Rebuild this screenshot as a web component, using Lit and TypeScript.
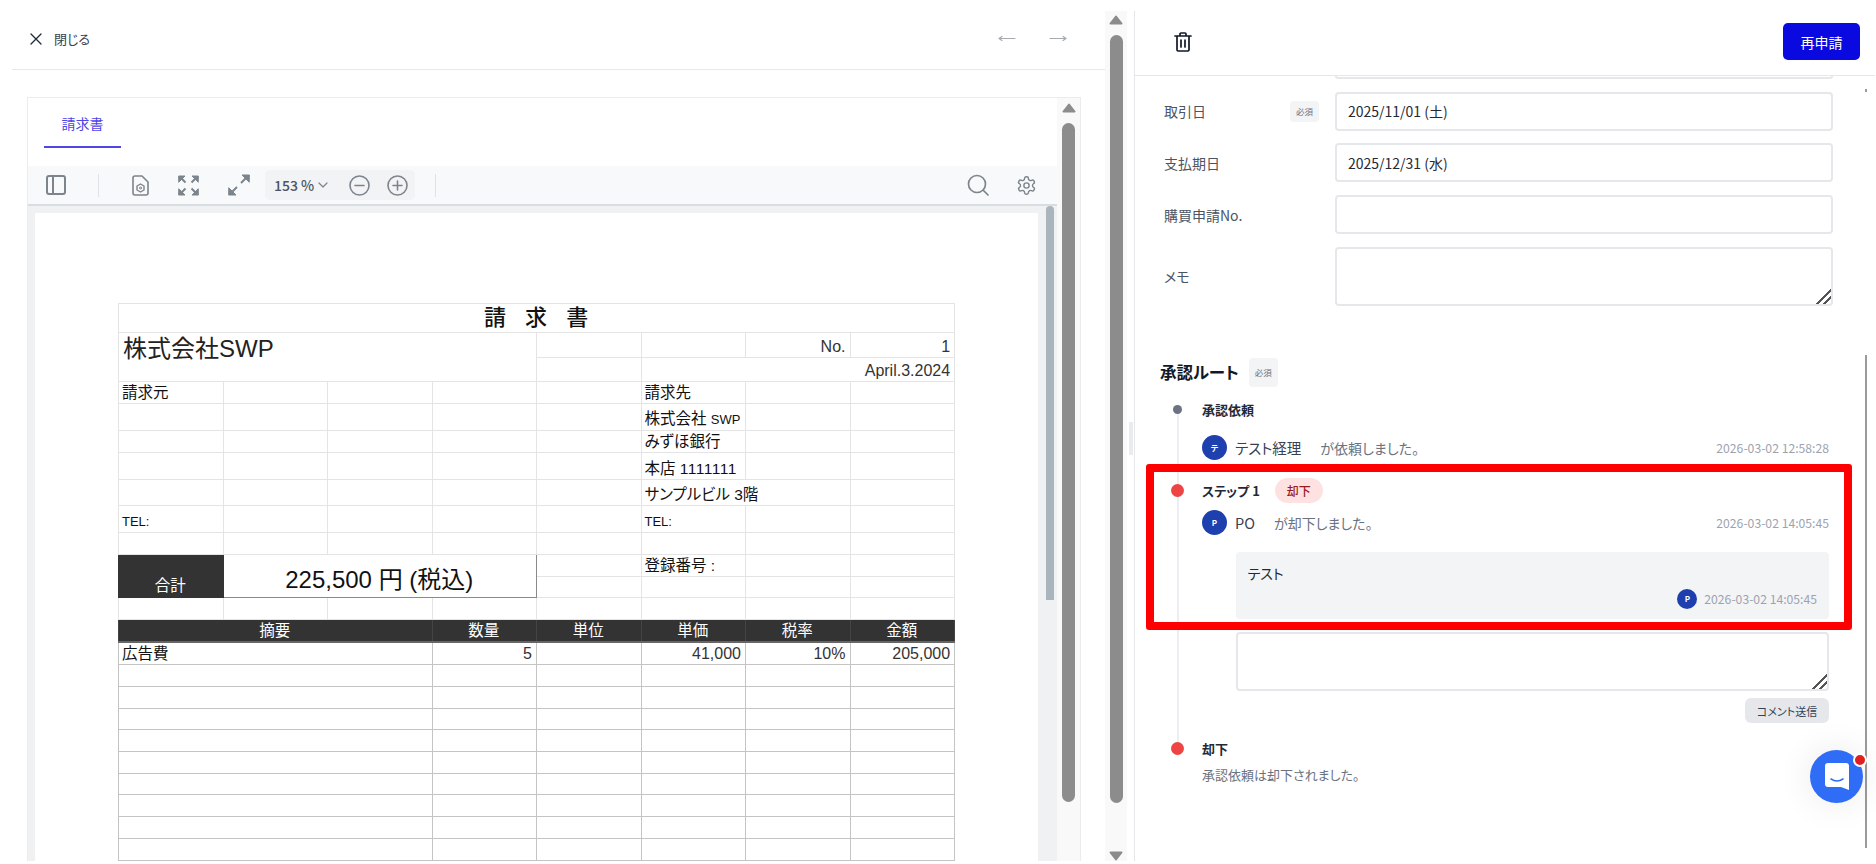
import { LitElement, html, css, svg } from 'lit';
import { customElement } from 'lit/decorators.js';

const BLANK_ROWS = 10;

const arrowUp = html`<svg class="tri" viewBox="0 0 14 10"><path d="M7 1.5 12.5 8.5H1.5Z" fill="#8c8c8c" stroke="#8c8c8c" stroke-width="2" stroke-linejoin="round"/></svg>`;
const arrowDown = html`<svg class="tri" viewBox="0 0 14 10"><path d="M1.5 1.5H12.5L7 8.5Z" fill="#8c8c8c" stroke="#8c8c8c" stroke-width="2" stroke-linejoin="round"/></svg>`;

const icon = (w: number, h: number, body: unknown, box = '0 0 24 24') => html`
  <svg class="ico" width=${w} height=${h} viewBox=${box} fill="none" stroke="currentColor" stroke-width="2" stroke-linecap="round" stroke-linejoin="round">${body}</svg>
`;

const gearPath = 'M12.22 2h-.44a2 2 0 0 0-2 2v.18a2 2 0 0 1-1 1.73l-.43.25a2 2 0 0 1-2 0l-.15-.08a2 2 0 0 0-2.73.73l-.22.38a2 2 0 0 0 .73 2.73l.15.1a2 2 0 0 1 1 1.72v.51a2 2 0 0 1-1 1.74l-.15.09a2 2 0 0 0-.73 2.73l.22.38a2 2 0 0 0 2.73.73l.15-.08a2 2 0 0 1 2 0l.43.25a2 2 0 0 1 1 1.73V20a2 2 0 0 0 2 2h.44a2 2 0 0 0 2-2v-.18a2 2 0 0 1 1-1.73l.43-.25a2 2 0 0 1 2 0l.15.08a2 2 0 0 0 2.73-.73l.22-.39a2 2 0 0 0-.73-2.73l-.15-.08a2 2 0 0 1-1-1.74v-.5a2 2 0 0 1 1-1.74l.15-.09a2 2 0 0 0 .73-2.73l-.22-.38a2 2 0 0 0-2.73-.73l-.15.08a2 2 0 0 1-2 0l-.43-.25a2 2 0 0 1-1-1.73V4a2 2 0 0 0-2-2z';

@customElement('invoice-sheet')
export class InvoiceSheet extends LitElement {
  static styles = css`
    :host {
      display: block;
    }
    table {
      width: 836px;
      table-layout: fixed;
      border-collapse: collapse;
      font-family: 'Liberation Sans', 'Noto Sans CJK JP', sans-serif;
      font-size: 15.5px;
      line-height: 21px;
      color: #111;
    }
    td {
      border: 1px solid #e4e4e4;
      padding: 0 4px 0 3px;
      vertical-align: bottom;
      white-space: nowrap;
      overflow: hidden;
    }
    .title {
      text-align: center;
      vertical-align: middle;
      font-size: 22px;
      font-weight: 500;
      line-height: 26px;
      word-spacing: 13px;
      color: #111;
    }
    .company {
      vertical-align: top;
      font-size: 24px;
      line-height: 24px;
      padding: 4px 4px 0;
      color: #222;
    }
    .num {
      text-align: right;
      font-size: 16px;
      color: #333;
    }
    .small {
      font-size: 13px;
    }
    .digits {
      letter-spacing: 0.5px;
    }
    .total-label {
      background: #333;
      border-color: #333;
      color: #fff;
      text-align: center;
      vertical-align: middle;
      padding-top: 20px;
      line-height: 20px;
    }
    .total-value {
      border: 1px solid #8a8a8a;
      text-align: center;
      vertical-align: middle;
      font-size: 24px;
      line-height: 24px;
      padding-top: 8px;
      color: #111;
    }
    .head td {
      background: #333;
      border-color: #444;
      border-bottom: 2px solid #666;
      color: #fff;
      text-align: center;
      vertical-align: middle;
    }
    .lined td {
      border-color: #c4c4c4;
    }
  `;

  private row(h: number, cells: unknown, cls = '') {
    return html`<tr class=${cls} style="height:${h}px">${cells}</tr>`;
  }

  private emptyCells(n: number) {
    return Array.from({ length: n }, () => html`<td></td>`);
  }

  render() {
    const blanks = Array.from({ length: BLANK_ROWS }, () =>
      this.row(21.7, html`<td colspan="3"></td>${this.emptyCells(5)}`, 'lined'),
    );
    const plain = (h: number, right: unknown) =>
      this.row(h, html`${this.emptyCells(5)}<td>${right}</td>${this.emptyCells(2)}`);

    return html`
      <table>
        <colgroup>${Array.from({ length: 8 }, () => html`<col style="width:104.5px" />`)}</colgroup>
        ${this.row(29.4, html`<td class="title" colspan="8">請 求 書</td>`)}
        ${this.row(24.6, html`
          <td class="company" colspan="4" rowspan="2">株式会社SWP</td>
          <td></td><td></td>
          <td class="num">No.</td><td class="num">1</td>
        `)}
        ${this.row(24, html`<td></td><td class="num" colspan="3">April.3.2024</td>`)}
        ${this.row(21.4, html`<td>請求元</td>${this.emptyCells(4)}<td>請求先</td><td></td><td></td>`)}
        ${plain(26.6, html`株式会社 <span class="small">SWP</span>`)}
        ${plain(22, 'みずほ銀行')}
        ${plain(27, html`本店 <span class="digits">1111111</span>`)}
        ${this.row(26.7, html`${this.emptyCells(5)}<td colspan="2">サンプルビル 3階</td><td></td>`)}
        ${this.row(27, html`<td class="small">TEL:</td>${this.emptyCells(4)}<td class="small">TEL:</td><td></td><td></td>`)}
        ${this.row(21.3, this.emptyCells(8))}
        ${this.row(22, html`
          <td class="total-label" rowspan="2">合計</td>
          <td class="total-value" colspan="3" rowspan="2">225,500 円 (税込)</td>
          <td></td><td>登録番号 :</td><td></td><td></td>
        `)}
        ${this.row(21.4, this.emptyCells(4))}
        ${this.row(21.6, this.emptyCells(8))}
        ${this.row(22.4, html`
          <td colspan="3">摘要</td><td>数量</td><td>単位</td><td>単価</td><td>税率</td><td>金額</td>
        `, 'head')}
        ${this.row(23.3, html`
          <td colspan="3">広告費</td>
          <td class="num">5</td><td></td><td class="num">41,000</td><td class="num">10%</td><td class="num">205,000</td>
        `, 'lined')}
        ${blanks}
      </table>
    `;
  }
}

@customElement('app-root')
export class AppRoot extends LitElement {
  static styles = css`
    :host {
      display: block;
      position: relative;
      width: 1876px;
      height: 864px;
      overflow: hidden;
      background: #fff;
      font-family: 'Noto Sans CJK JP', sans-serif;
      font-feature-settings: 'palt' 1;
      font-size: 14px;
      color: #374151;
    }
    .layout {
      display: flex;
      height: 861px;
    }
    .ico {
      display: block;
      flex: none;
    }
    .tri {
      display: block;
      width: 14px;
      height: 10px;
      flex: none;
    }

    /* left side */
    .left {
      width: 1093px;
      margin-left: 12px;
      display: flex;
      flex-direction: column;
      overflow: hidden;
    }
    .left-head {
      height: 70px;
      flex: none;
      display: flex;
      align-items: center;
      padding: 8px 38px 0 18px;
      box-sizing: border-box;
      border-bottom: 1px solid #e5e7eb;
    }
    .close {
      display: flex;
      align-items: center;
      gap: 12px;
      font-size: 13px;
      color: #374151;
    }
    .close .ico {
      color: #1f2937;
    }
    .pager {
      margin-left: auto;
      display: flex;
      gap: 33px;
    }
    .card {
      flex: 1;
      min-height: 0;
      width: 1054px;
      margin: 27px 0 0 15px;
      display: flex;
      box-sizing: border-box;
      border: 1px solid #ececec;
      border-bottom: 0;
      overflow: hidden;
    }
    .card-main {
      width: 1029px;
      flex: none;
      display: flex;
      flex-direction: column;
    }
    .tab {
      width: 77px;
      height: 50px;
      margin: 0 0 18px 16px;
      padding-top: 1px;
      flex: none;
      box-sizing: border-box;
      display: flex;
      align-items: center;
      justify-content: center;
      border-bottom: 2px solid #4f46e5;
      color: #4f46e5;
      font-size: 14px;
    }
    .toolbar {
      height: 40px;
      flex: none;
      box-sizing: border-box;
      display: flex;
      align-items: center;
      padding: 0 20px 0 18px;
      background: #f8f9fa;
      border-bottom: 2px solid #d8dde2;
      color: #7d848c;
    }
    .sep {
      width: 1px;
      height: 23px;
      background: #dfe2e6;
      flex: none;
    }
    .sep.a {
      margin: 0 33px 0 32px;
    }
    .sep.b {
      margin-left: 20px;
    }
    .ml-29 {
      margin-left: 29px;
    }
    .zoom {
      width: 150px;
      height: 30px;
      margin-left: 15px;
      padding-left: 9px;
      box-sizing: border-box;
      display: flex;
      align-items: center;
      background: #f1f3f5;
      border-radius: 5px;
      flex: none;
    }
    .zoom-value {
      font-size: 14px;
      font-weight: 500;
      color: #4b5563;
      width: 44px;
    }
    .zoom .minus {
      margin-left: 21px;
    }
    .zoom .plus {
      margin-left: 17px;
    }
    .tools-end {
      margin-left: auto;
      display: flex;
      align-items: center;
      gap: 27px;
    }
    .viewer {
      flex: 1;
      min-height: 0;
      display: flex;
      background: #eff1f3;
      overflow: hidden;
    }
    .page {
      width: 1003px;
      margin: 7px 0 0 7px;
      padding: 90px 0 0 83px;
      box-sizing: border-box;
      background: #fff;
      flex: none;
    }
    .viewer-thumb {
      width: 8px;
      height: 394px;
      margin-left: 8px;
      background: #aab4bd;
      border-radius: 4px 4px 0 0;
      flex: none;
    }
    .bar {
      flex: none;
      display: flex;
      flex-direction: column;
      align-items: center;
      background: #f9f9f9;
    }
    .bar .thumb {
      width: 13px;
      background: #8c8c8c;
      border-radius: 7px;
      flex: none;
    }
    .card-bar {
      width: 23px;
    }
    .card-bar .tri {
      margin-top: 5px;
    }
    .card-bar .thumb {
      margin-top: 10px;
      height: 679px;
    }
    .page-bar {
      width: 22px;
      margin-top: 11px;
    }
    .page-bar .tri:first-child {
      margin-top: 4px;
    }
    .page-bar .thumb {
      margin-top: 10px;
      height: 768px;
    }
    .page-bar .tri:last-child {
      margin-top: auto;
    }
    .gutter {
      width: 7px;
      flex: none;
      display: flex;
      justify-content: center;
    }
    .grip {
      width: 4px;
      height: 33px;
      margin-top: 422px;
      background: #e9ebee;
    }

    /* right side */
    .right {
      width: 741px;
      flex: none;
      box-sizing: border-box;
      padding-left: 1px;
      background: linear-gradient(#e5e7eb, #e5e7eb) 0 11px / 1px 100% no-repeat;
      display: flex;
      flex-direction: column;
      overflow: hidden;
    }
    .right-head {
      height: 76px;
      flex: none;
      box-sizing: border-box;
      display: flex;
      align-items: center;
      justify-content: space-between;
      padding: 8px 15px 0 39px;
      border-bottom: 1px solid #e5e7eb;
      color: #111827;
    }
    .resubmit {
      width: 77px;
      height: 37px;
      border: 0;
      border-radius: 5px;
      background: #0a0ae0;
      color: #fff;
      font: inherit;
      font-size: 14px;
    }
    .right-body {
      flex: 1;
      min-height: 0;
      display: flex;
    }
    .content {
      width: 730px;
      flex: none;
      padding-left: 29px;
      box-sizing: border-box;
    }
    .form {
      width: 668.5px;
      display: grid;
      grid-template-columns: 155px 1fr;
      column-gap: 16px;
      row-gap: 12.7px;
      align-items: center;
    }
    .stub {
      grid-column: 2;
      height: 3px;
      box-sizing: border-box;
      border: 2px solid #e5e7eb;
      border-top: 0;
      border-radius: 0 0 4px 4px;
    }
    .label {
      display: flex;
      align-items: center;
      justify-content: space-between;
      color: #4b5563;
    }
    .req {
      display: flex;
      align-items: center;
      justify-content: center;
      width: 29px;
      height: 21px;
      border-radius: 4px;
      background: #f3f4f6;
      color: #6b7280;
      font-size: 8.5px;
    }
    .field {
      height: 39px;
      box-sizing: border-box;
      border: 2px solid #e5e7eb;
      border-radius: 4px;
      padding: 0 11px;
      display: flex;
      align-items: center;
      color: #1f2937;
      background: #fff;
    }
    textarea {
      display: block;
      width: 100%;
      box-sizing: border-box;
      border: 2px solid #e5e7eb;
      border-radius: 4px;
      outline: none;
      background: #fff;
      margin: 0;
    }
    textarea::-webkit-resizer {
      background: linear-gradient(
        135deg,
        transparent 48%,
        #555 48%,
        #555 58%,
        transparent 58%,
        transparent 72%,
        #555 72%,
        #555 82%,
        transparent 82%
      );
    }
    .memo {
      height: 59px;
    }
    .route-head {
      display: flex;
      align-items: center;
      gap: 10px;
      margin: 52px 0 0 -4px;
      font-size: 16.5px;
      font-weight: 700;
      color: #111827;
    }
    .route-head .req {
      height: 29px;
      font-weight: 400;
    }
    .timeline {
      position: relative;
      width: 665px;
      margin-top: 11px;
    }
    .line {
      position: absolute;
      left: 13px;
      top: 12px;
      height: 338px;
      width: 2px;
      background: #eceef1;
    }
    .step-title {
      position: relative;
      height: 24px;
      display: flex;
      align-items: center;
      font-weight: 700;
      color: #1f2937;
      font-size: 13px;
    }
    .dot-cell {
      width: 27px;
      margin-right: 11px;
      display: flex;
      justify-content: center;
      flex: none;
    }
    .dot {
      width: 13px;
      height: 13px;
      border-radius: 50%;
      background: #ef4444;
    }
    .dot.grey {
      width: 9px;
      height: 9px;
      background: #6b7280;
    }
    .who {
      height: 25px;
      display: flex;
      align-items: center;
      padding-left: 38px;
      color: #6b7280;
    }
    .avatar {
      width: 25px;
      height: 25px;
      margin-right: 8px;
      border-radius: 50%;
      background: #1e40af;
      color: #fff;
      font-size: 8px;
      font-weight: 700;
      display: flex;
      align-items: center;
      justify-content: center;
      flex: none;
    }
    .avatar.sm {
      width: 20px;
      height: 20px;
    }
    .name {
      font-size: 14.5px;
      color: #374151;
      margin-right: 19px;
    }
    .time {
      margin-left: auto;
      font-size: 12.2px;
      color: #9ca3af;
    }
    .first-who {
      margin-top: 13.5px;
    }
    .step-two {
      height: 25px;
      margin-top: 17.5px;
    }
    .second-who {
      margin-top: 7.5px;
    }
    .rejected {
      margin-left: 15px;
      width: 48px;
      height: 25px;
      border-radius: 13px;
      background: #fee2e2;
      color: #991b1b;
      font-size: 12px;
      font-weight: 500;
      display: flex;
      align-items: center;
      justify-content: center;
    }
    .indented {
      margin-left: 71.6px;
    }
    .comment {
      height: 67px;
      margin-top: 16.5px;
      box-sizing: border-box;
      padding: 10px 12px 0;
      border-radius: 4px;
      background: #f3f4f6;
      color: #1f2937;
      line-height: 22px;
    }
    .comment-foot {
      display: flex;
      align-items: center;
      justify-content: flex-end;
      margin-top: 5px;
      height: 20px;
    }
    .comment-foot .avatar {
      margin-right: 7px;
    }
    .comment-foot .time {
      margin-left: 0;
    }
    .reply {
      height: 59px;
      margin-top: 13px;
      width: calc(100% - 71.6px);
    }
    .send-row {
      display: flex;
      justify-content: flex-end;
      margin-top: 7.5px;
    }
    .send {
      width: 84px;
      height: 25px;
      border: 0;
      border-radius: 6px;
      background: #e5e7eb;
      color: #374151;
      font: inherit;
      font-size: 11px;
    }
    .step-end {
      margin-top: 13px;
    }
    .desc {
      margin: 5.5px 0 0 38px;
      height: 18px;
      line-height: 18px;
      font-size: 13px;
      color: #6b7280;
    }
    .sliver {
      width: 2px;
      flex: none;
      display: flex;
      flex-direction: column;
    }
    .sliver i {
      display: block;
      background: #9a9a9a;
      flex: none;
    }
    .sliver .top {
      height: 3px;
      margin-top: 13px;
    }
    .sliver .run {
      height: 493px;
      margin-top: 263px;
    }

    /* overlays */
    .highlight {
      position: absolute;
      left: 1146px;
      top: 464px;
      width: 706px;
      height: 166px;
      box-sizing: border-box;
      border: 8px solid #ff0000;
      border-radius: 3px;
    }
    .chat {
      position: absolute;
      left: 1810px;
      top: 750px;
      width: 53px;
      height: 53px;
      border-radius: 50%;
      background: #2f6df6;
      box-shadow: 0 0 36px rgba(0, 0, 0, 0.09);
      display: flex;
      align-items: center;
      justify-content: center;
    }
    .chat-dot {
      position: absolute;
      left: 42.5px;
      top: 3px;
      width: 10px;
      height: 10px;
      border: 2px solid #fff;
      border-radius: 50%;
      background: #e02020;
    }
  `;

  render() {
    const req = html`<span class="req">必須</span>`;
    return html`
      <div class="layout">
        <section class="left">
          <header class="left-head">
            <div class="close">
              ${icon(12, 12, svg`<path d="M2 2 22 22M22 2 2 22" stroke-width="2.6"/>`)}
              <span>閉じる</span>
            </div>
            <div class="pager">
              ${icon(18, 9, svg`<path d="M1 4.5H17M1 4.5 4 2.5M1 4.5 4 6.5" stroke="#a6abb2" stroke-width="1.2"/>`, '0 0 18 9')}
              ${icon(18, 9, svg`<path d="M1 4.5H17M17 4.5 14 2.5M17 4.5 14 6.5" stroke="#a6abb2" stroke-width="1.2"/>`, '0 0 18 9')}
            </div>
          </header>
          <div class="card">
            <div class="card-main">
              <div class="tab">請求書</div>
              <div class="toolbar">
                ${icon(20, 20, svg`<rect x="1" y="1" width="18" height="18" rx="2"/><path d="M7 1V19"/>`, '0 0 20 20')}
                <span class="sep a"></span>
                ${icon(17, 21, svg`<path d="M3 1H10L16 7V18A2 2 0 0 1 14 20H3A2 2 0 0 1 1 18V3A2 2 0 0 1 3 1Z" stroke-width="1.6"/><path d="M8.5 9 12 11V15L8.5 17 5 15V11Z" stroke-width="1.4"/><circle cx="8.5" cy="13" r="1" stroke-width="1"/>`, '0 0 17 21')}
                <span class="ml-29">
                  ${icon(21, 21, svg`
                    <path d="M1 1H7L1 7ZM20 1H14L20 7ZM1 20H7L1 14ZM20 20H14L20 14Z" fill="currentColor" stroke-width="1"/>
                    <path d="M3 3 7.5 7.5M18 3 13.5 7.5M3 18 7.5 13.5M18 18 13.5 13.5" stroke-linecap="butt"/>
                  `, '0 0 21 21')}
                </span>
                <span class="ml-29">
                  ${icon(22, 22, svg`
                    <path d="M21 1H14L21 8ZM1 21H8L1 14Z" fill="currentColor" stroke-width="1"/>
                    <path d="M18 4 13 9M4 18 9 13" stroke-linecap="butt"/>
                  `, '0 0 22 22')}
                </span>
                <div class="zoom">
                  <span class="zoom-value">153 %</span>
                  ${icon(10, 6, svg`<path d="M1 1 5 5 9 1" stroke-width="1.2"/>`, '0 0 10 6')}
                  <span class="minus">${icon(21, 21, svg`<circle cx="10.5" cy="10.5" r="9.5" stroke-width="1.6"/><path d="M6 10.5H15" stroke-width="1.6"/>`, '0 0 21 21')}</span>
                  <span class="plus">${icon(21, 21, svg`<circle cx="10.5" cy="10.5" r="9.5" stroke-width="1.6"/><path d="M6 10.5H15M10.5 6V15" stroke-width="1.6"/>`, '0 0 21 21')}</span>
                </div>
                <span class="sep b"></span>
                <div class="tools-end">
                  ${icon(22, 22, svg`<circle cx="10" cy="10" r="8.5" stroke-width="1.7"/><path d="M16.5 16.5 21 21" stroke-width="1.7"/>`, '0 0 22 22')}
                  ${icon(21, 21, svg`<path d=${gearPath} stroke-width="1.6"/><circle cx="12" cy="12" r="3" stroke-width="1.6"/>`)}
                </div>
              </div>
              <div class="viewer">
                <div class="page"><invoice-sheet></invoice-sheet></div>
                <div class="viewer-thumb"></div>
              </div>
            </div>
            <div class="bar card-bar">${arrowUp}<div class="thumb"></div></div>
          </div>
        </section>
        <div class="bar page-bar">${arrowUp}<div class="thumb"></div>${arrowDown}</div>
        <div class="gutter"><div class="grip"></div></div>
        <section class="right">
          <header class="right-head">
            ${icon(18, 20, svg`<path d="M1 4H17M6 4V2A1 1 0 0 1 7 1H11A1 1 0 0 1 12 2V4M3 4V18A1.5 1.5 0 0 0 4.5 19H13.5A1.5 1.5 0 0 0 15 18V4M7 8V15M11 8V15" stroke-width="1.7"/>`, '0 0 18 20')}
            <button class="resubmit">再申請</button>
          </header>
          <div class="right-body">
            <div class="content">
              <div class="form">
                <div class="stub"></div>
                <div class="label"><span>取引日</span>${req}</div>
                <div class="field">2025/11/01 (土)</div>
                <div class="label"><span>支払期日</span></div>
                <div class="field">2025/12/31 (水)</div>
                <div class="label"><span>購買申請No.</span></div>
                <div class="field"></div>
                <div class="label"><span>メモ</span></div>
                <textarea class="memo"></textarea>
              </div>
              <div class="route-head"><span>承認ルート</span>${req}</div>
              <div class="timeline">
                <div class="line"></div>
                <div class="step-title">
                  <span class="dot-cell"><span class="dot grey"></span></span>承認依頼
                </div>
                <div class="who first-who">
                  <span class="avatar">テ</span>
                  <span class="name">テスト経理</span>
                  <span>が依頼しました。</span>
                  <span class="time">2026-03-02 12:58:28</span>
                </div>
                <div class="step-title step-two">
                  <span class="dot-cell"><span class="dot"></span></span>ステップ 1
                  <span class="rejected">却下</span>
                </div>
                <div class="who second-who">
                  <span class="avatar">P</span>
                  <span class="name">PO</span>
                  <span>が却下しました。</span>
                  <span class="time">2026-03-02 14:05:45</span>
                </div>
                <div class="comment indented">
                  <div>テスト</div>
                  <div class="comment-foot">
                    <span class="avatar sm">P</span>
                    <span class="time">2026-03-02 14:05:45</span>
                  </div>
                </div>
                <textarea class="reply indented"></textarea>
                <div class="send-row"><button class="send">コメント送信</button></div>
                <div class="step-title step-end">
                  <span class="dot-cell"><span class="dot"></span></span>却下
                </div>
                <div class="desc">承認依頼は却下されました。</div>
              </div>
            </div>
            <div class="sliver"><i class="top"></i><i class="run"></i></div>
          </div>
        </section>
      </div>
      <div class="highlight"></div>
      <div class="chat">
        <svg width="24" height="28" viewBox="0 0 24 28">
          <path d="M3 0H21A3 3 0 0 1 24 3V27L16 24H3A3 3 0 0 1 0 21V3A3 3 0 0 1 3 0Z" fill="#fff"/>
          <path d="M6 16Q12 20 18 16" fill="none" stroke="#2f6df6" stroke-width="1.6" stroke-linecap="round"/>
        </svg>
        <span class="chat-dot"></span>
      </div>
    `;
  }
}
